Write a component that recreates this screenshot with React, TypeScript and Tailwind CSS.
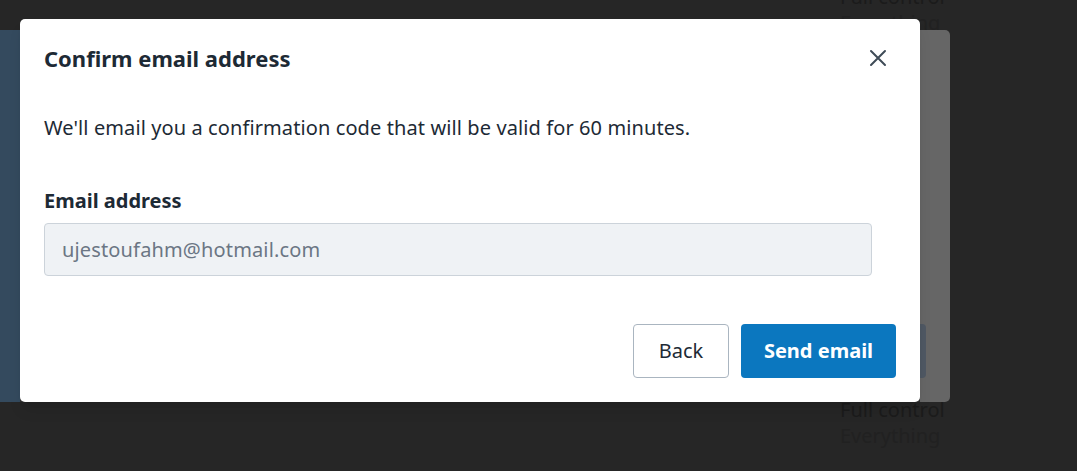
import React from 'react';

const font = { fontFamily: '"Noto Sans", "Open Sans", sans-serif' };

const CloseIcon = () => (
  <svg width="18" height="18" viewBox="0 0 18 18" fill="none" stroke="currentColor" strokeWidth="2" strokeLinecap="round">
    <path d="M2 2L16 16M16 2L2 16" />
  </svg>
);

const SideText = ({ className = '' }: { className?: string }) => (
  <div className={`pl-[840px] text-[20px] leading-[26px] ${className}`}>
    <div className="text-[#1b1b1b]">Full control</div>
    <div className="text-[#212121]">Everything</div>
  </div>
);

const App: React.FC = () => {
  return (
    <div className="relative h-[471px] w-full overflow-hidden bg-[#262626]" style={font}>
      {/* page behind the overlay */}
      <div className="flex flex-col">
        <SideText className="-mt-[16px]" />
        <div className="-mt-[6px] flex h-[372px] w-[950px] overflow-hidden rounded-r-[5px]">
          <div className="w-[20px] bg-[#344a5e]" />
          <div className="flex-1 bg-[#343434]" />
          <div className="flex w-[30px] flex-col bg-[#666666] pt-[294px]">
            <div className="h-[54px] w-[6px] rounded-r-[4px] bg-[#4f5863]" />
          </div>
        </div>
        <SideText className="-mt-[5px]" />
      </div>

      {/* modal */}
      <div className="absolute left-[20px] top-[19px] flex h-[383px] w-[900px] flex-col rounded-[5px] bg-white px-[24px] pb-[24px] shadow-lg">
        <div className="flex items-center justify-between pt-[23px]">
          <h2 className="text-[22px] font-bold leading-[32px] text-[#1d2a35]">Confirm email address</h2>
          <button className="mr-[9px] text-[#3f4b57]" aria-label="Close">
            <CloseIcon />
          </button>
        </div>
        <p className="mt-[40px] text-[20px] leading-[28px] tracking-[0.1px] text-[#1d2a35]">
          We'll email you a confirmation code that will be valid for 60 minutes.
        </p>
        <label className="mt-[45px] block text-[20px] font-bold leading-[28px] text-[#1d2a35]">Email address</label>
        <input
          readOnly
          value="ujestoufahm@hotmail.com"
          className="mt-[8px] h-[53px] w-[828px] rounded-[4px] border border-[#ccd3da] bg-[#eff2f5] px-[17px] text-[20px] tracking-[0.15px] text-[#6b7684] outline-none"
        />
        <div className="mt-auto flex justify-end gap-[12px]">
          <button className="h-[54px] w-[96px] rounded-[4px] border border-[#aab5c0] bg-white text-[20px] text-[#1d2a35]">
            Back
          </button>
          <button className="h-[54px] w-[155px] rounded-[4px] bg-[#0b77bf] text-[20px] font-bold text-white">
            Send email
          </button>
        </div>
      </div>
    </div>
  );
};

export default App;
